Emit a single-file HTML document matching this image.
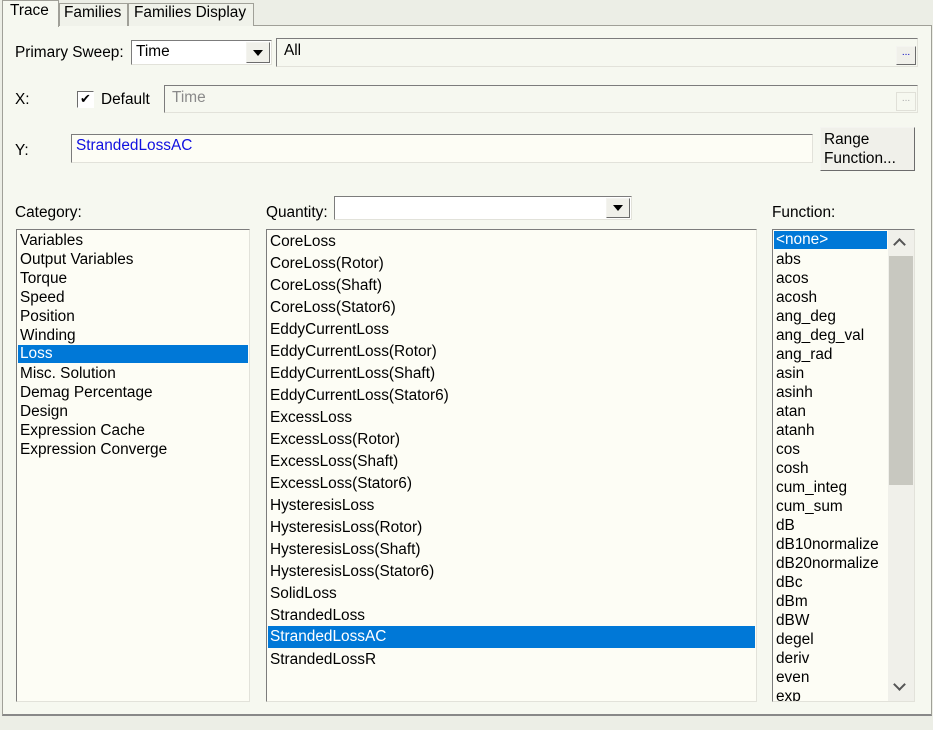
<!DOCTYPE html>
<html><head><style>
*{box-sizing:border-box;margin:0;padding:0}
body{width:933px;height:730px;background:#eceee6;font-family:"Liberation Sans","DejaVu Sans",sans-serif;font-size:15.4px;color:#000;position:relative;overflow:hidden}
.a{position:absolute}
.sunk{border:1px solid;border-color:#7c7c7c #e2e2da #e2e2da #7c7c7c;background:#fdfdf5}
.btn{border:1px solid;border-color:#f4f4f0 #6c6c6c #6c6c6c #f4f4f0;background:#f0f0ea}
.row{position:absolute;left:1px;right:1px;padding-left:2px;white-space:nowrap;line-height:18px}
.sel{background:#0078d7;color:#fff}
.tri{position:absolute;width:0;height:0;border-left:5px solid transparent;border-right:5px solid transparent;border-top:6px solid #000}
</style></head><body>
<div class="a" style="left:2px;top:25px;width:930px;height:691px;background:#f6f8f0;border:1px solid #a0a098;border-bottom:2px solid #888"></div>
<div class="a" style="left:2px;top:0;width:57px;height:27px;background:#f6f8f0;border:1px solid #a0a098;border-bottom:none"></div>
<div class="a" style="left:10px;top:2px">Trace</div>
<div class="a" style="left:59px;top:3px;width:69px;height:23px;background:#f0f2ea;border:1px solid #a0a098;border-bottom:none"></div>
<div class="a" style="left:64px;top:4px">Families</div>
<div class="a" style="left:128px;top:3px;width:126px;height:23px;background:#f0f2ea;border:1px solid #a0a098;border-bottom:none"></div>
<div class="a" style="left:134px;top:4px">Families Display</div>

<div class="a" style="left:15px;top:44px">Primary Sweep:</div>
<div class="a sunk" style="left:131px;top:40px;width:141px;height:25px;background:#fff"></div>
<div class="a" style="left:136px;top:43px">Time</div>
<div class="a btn" style="left:246px;top:42px;width:24px;height:21px"><div class="tri" style="left:6px;top:7px"></div></div>
<div class="a sunk" style="left:276px;top:38px;width:642px;height:29px;background:#f6f8f0"></div>
<div class="a" style="left:284px;top:42px">All</div>
<div class="a btn" style="left:896px;top:46px;width:20px;height:19px;font-size:10px;color:#0000c0;text-align:center;line-height:12px">...</div>

<div class="a" style="left:15px;top:91px">X:</div>
<div class="a" style="left:77px;top:91px;width:17px;height:17px;border:1px solid;border-color:#6c6c6c #fff #fff #6c6c6c;background:#fff;font-size:13px;line-height:14px;text-align:center;font-weight:bold">✔</div>
<div class="a" style="left:101px;top:91px">Default</div>
<div class="a sunk" style="left:164px;top:85px;width:754px;height:28px;background:#f6f8f0"></div>
<div class="a" style="left:172px;top:89px;color:#8a8a8a">Time</div>
<div class="a" style="left:896px;top:92px;width:20px;height:19px;border:1px solid #e0e0d8;font-size:10px;color:#aaa;text-align:center;line-height:12px">...</div>

<div class="a" style="left:15px;top:142px">Y:</div>
<div class="a sunk" style="left:71px;top:134px;width:742px;height:29px"></div>
<div class="a" style="left:76px;top:137px;color:#1010e0">StrandedLossAC</div>
<div class="a btn" style="left:820px;top:127px;width:95px;height:44px;padding:2px 0 0 3px;line-height:19px">Range<br>Function...</div>

<div class="a" style="left:15px;top:204px">Category:</div>
<div class="a" style="left:266px;top:204px">Quantity:</div>
<div class="a sunk" style="left:334px;top:196px;width:298px;height:24px;background:#fff"></div>
<div class="a btn" style="left:606px;top:198px;width:24px;height:20px"><div class="tri" style="left:6px;top:6px"></div></div>
<div class="a" style="left:772px;top:204px">Function:</div>

<div class="a sunk" style="left:16px;top:229px;width:234px;height:473px">
<div class="row" style="top:2px">Variables</div>
<div class="row" style="top:21px">Output Variables</div>
<div class="row" style="top:40px">Torque</div>
<div class="row" style="top:59px">Speed</div>
<div class="row" style="top:78px">Position</div>
<div class="row" style="top:97px">Winding</div>
<div class="row sel" style="top:115px;height:18px">Loss</div>
<div class="row" style="top:135px">Misc. Solution</div>
<div class="row" style="top:154px">Demag Percentage</div>
<div class="row" style="top:173px">Design</div>
<div class="row" style="top:192px">Expression Cache</div>
<div class="row" style="top:211px">Expression Converge</div>
</div>

<div class="a sunk" style="left:266px;top:229px;width:491px;height:473px">
<div class="row" style="top:3px">CoreLoss</div>
<div class="row" style="top:25px">CoreLoss(Rotor)</div>
<div class="row" style="top:47px">CoreLoss(Shaft)</div>
<div class="row" style="top:69px">CoreLoss(Stator6)</div>
<div class="row" style="top:91px">EddyCurrentLoss</div>
<div class="row" style="top:113px">EddyCurrentLoss(Rotor)</div>
<div class="row" style="top:135px">EddyCurrentLoss(Shaft)</div>
<div class="row" style="top:157px">EddyCurrentLoss(Stator6)</div>
<div class="row" style="top:179px">ExcessLoss</div>
<div class="row" style="top:201px">ExcessLoss(Rotor)</div>
<div class="row" style="top:223px">ExcessLoss(Shaft)</div>
<div class="row" style="top:245px">ExcessLoss(Stator6)</div>
<div class="row" style="top:267px">HysteresisLoss</div>
<div class="row" style="top:289px">HysteresisLoss(Rotor)</div>
<div class="row" style="top:311px">HysteresisLoss(Shaft)</div>
<div class="row" style="top:333px">HysteresisLoss(Stator6)</div>
<div class="row" style="top:355px">SolidLoss</div>
<div class="row" style="top:377px">StrandedLoss</div>
<div class="row sel" style="top:396px;height:22px;padding-top:2px">StrandedLossAC</div>
<div class="row" style="top:421px">StrandedLossR</div>
</div>

<div class="a sunk" style="left:772px;top:229px;width:143px;height:473px;overflow:hidden">
<div class="a" style="left:115px;top:0;width:26px;height:471px;background:#f0f0ea"></div>
<div class="a" style="left:116px;top:26px;width:24px;height:229px;background:#c8c8c0"></div>
<div class="a" style="left:122px;top:10px;width:9px;height:9px;border-left:2px solid #555;border-top:2px solid #555;transform:rotate(45deg)"></div>
<div class="a" style="left:122px;top:450px;width:9px;height:9px;border-right:2px solid #555;border-bottom:2px solid #555;transform:rotate(45deg)"></div>
<div class="row sel" style="top:1px;right:27px;height:18px">&lt;none&gt;</div>
<div class="row" style="top:21px">abs</div>
<div class="row" style="top:40px">acos</div>
<div class="row" style="top:59px">acosh</div>
<div class="row" style="top:78px">ang_deg</div>
<div class="row" style="top:97px">ang_deg_val</div>
<div class="row" style="top:116px">ang_rad</div>
<div class="row" style="top:135px">asin</div>
<div class="row" style="top:154px">asinh</div>
<div class="row" style="top:173px">atan</div>
<div class="row" style="top:192px">atanh</div>
<div class="row" style="top:211px">cos</div>
<div class="row" style="top:230px">cosh</div>
<div class="row" style="top:249px">cum_integ</div>
<div class="row" style="top:268px">cum_sum</div>
<div class="row" style="top:287px">dB</div>
<div class="row" style="top:306px">dB10normalize</div>
<div class="row" style="top:325px">dB20normalize</div>
<div class="row" style="top:344px">dBc</div>
<div class="row" style="top:363px">dBm</div>
<div class="row" style="top:382px">dBW</div>
<div class="row" style="top:401px">degel</div>
<div class="row" style="top:420px">deriv</div>
<div class="row" style="top:439px">even</div>
<div class="row" style="top:458px">exp</div>
</div>
</body></html>
